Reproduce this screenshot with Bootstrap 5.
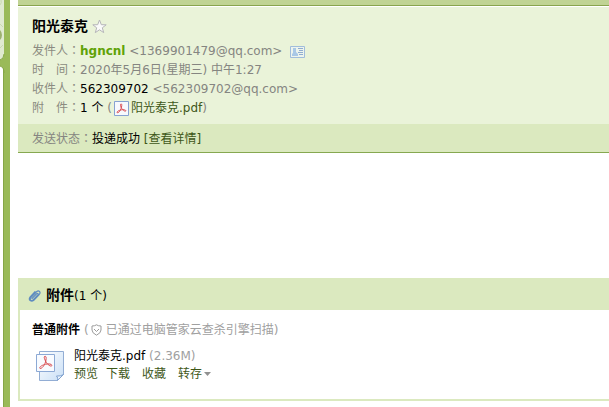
<!DOCTYPE html>
<html lang="zh-CN">
<head>
<meta charset="utf-8">
<meta name="viewport" content="width=device-width, initial-scale=1">
<title>阳光泰克</title>
<link href="https://cdn.jsdelivr.net/npm/bootstrap@5.3.0/dist/css/bootstrap.min.css" rel="stylesheet">
<style>
body { font-family: "DejaVu Sans", "Noto Sans CJK SC", sans-serif; font-size: 12px; line-height: 20px; color: #000; background: #fff; }
.side-rail { width: 10px; border-right: 6px solid #9aba58; box-shadow: inset -1px 0 #86a647; }
.side-rail svg { display: block; }
.mail-pane { padding-left: 8px; min-width: 0; }
.top-strip { height: 6px; background: #c0d394; border-bottom: 1px solid #89a44e; }
.mail-head { margin-top: 1px; padding: 8px 14px 6px; background: #eaf3d9; }
.mail-title { font-size: 14px; line-height: 22px; font-weight: 700; }
.mail-meta { padding-top: 5px; }
.send-state { padding: 5px 14px 3px; background: #dbe9bf; border-bottom: 1px solid #86a850; }
.mail-body { height: 125px; }
.meta-row { line-height: 19px; }
.meta-label { width: 48px; flex: none; color: #8b8b80; white-space: pre; }
.mid-colon { font-family: "Noto Sans CJK JP", sans-serif; line-height: 12px; }
.soft { color: #858581; }
.faint { color: #a0a0a0; }
.sender { color: #5fa207; }
.link-green { color: #3e5718; text-decoration: none; }
.link-green:hover { text-decoration: underline; }
.plain-btn { border: 0; padding: 0; background: none; line-height: inherit; display: inline-flex; }
.text-icon { margin: 0 2px; }
.attach-box { border: solid #dbe9bf; border-width: 0 0 2px 2px; }
.attach-head { padding: 8px 8px 4px; background: #dbe9bf; }
.attach-name { font-size: 14px; line-height: 14px; font-weight: 700; }
.attach-list { padding: 10px 12px 16px; }
.file-row { margin-top: 7px; line-height: 18px; padding-left: 4px; }
.file-actions { gap: 0 12px; }
</style>
</head>
<body>
<div class="d-flex min-vh-100">
  <aside class="side-rail flex-shrink-0">
    <svg width="10" height="76" viewBox="0 0 10 76" aria-hidden="true">
      <path d="M0 0h4v58L0 64z" fill="#e0ead0"/>
      <path d="M0 5q2-2 1-5M0 24l3 3M0 48l3-3" stroke="#c9d9b1" fill="none"/>
      <path d="M0 30q2 2 2 5t-2 5z" fill="#9cb16f"/>
      <path d="M5 54Q4 59 0 60v6q4 1 5 7z" fill="#9aba58"/>
      <path d="M4 54q0 5-4 6M0 66q4 1 4 7" fill="none" stroke="#86a647"/>
    </svg>
  </aside>
  <main class="mail-pane flex-grow-1">
    <div class="top-strip"></div>
    <header class="mail-head">
      <div class="d-flex align-items-center gap-1">
        <h1 class="mail-title mb-0">阳光泰克</h1>
        <button type="button" class="plain-btn" aria-label="星标">
          <svg width="15" height="15" viewBox="0 0 15 15"><path d="M7.5 1l1.8 4.7 4.9.1-3.9 3 1.4 4.8-4.2-2.8-4.2 2.8 1.4-4.8-3.9-3 4.9-.1z" fill="#fafafa" stroke="#b5b5b9"/></svg>
        </button>
      </div>
      <div class="mail-meta">
        <div class="meta-row d-flex">
          <span class="meta-label">发件人<span class="mid-colon" lang="ja">：</span></span>
          <span class="text-nowrap"><b class="sender">hgncnl</b> <span class="soft">&lt;1369901479@qq.com&gt;</span></span>
          <button type="button" class="plain-btn ms-2 align-self-center" aria-label="联系人">
            <svg width="15" height="12" viewBox="0 0 15 12"><path d="M.5.5h14v11H.5z" fill="#edf4ed" stroke="#a1bddb"/><path d="M3 2h3v4l2 2v2H2V8l1-1z" fill="#a9c8e6"/><path d="M8 2.5h5M9 4.5h4M8 6.5h5M9 8.5h4" stroke="#91add0"/></svg>
          </button>
        </div>
        <div class="meta-row d-flex"><span class="meta-label">时　间<span class="mid-colon" lang="ja">：</span></span><span class="soft">2020年5月6日(星期三) 中午1:27</span></div>
        <div class="meta-row d-flex"><span class="meta-label">收件人<span class="mid-colon" lang="ja">：</span></span><span>562309702 <span class="soft">&lt;562309702@qq.com&gt;</span></span></div>
        <div class="meta-row d-flex align-items-center">
          <span class="meta-label">附　件<span class="mid-colon" lang="ja">：</span></span><span>1 个 <span class="soft">(</span></span>
          <svg class="text-icon" width="15" height="15" viewBox="0 0 15 15" aria-hidden="true"><path d="M.5.5h14v14H.5z" fill="#f7f9fd" stroke="#86a2d2"/><path d="M6.8 3c1.5-.5 1 2 .3 4.500-.8 2.500-2.500 4.500-3.800 4.300-1.100-1.100 1.700-2.500 4.200-3 2.300-.4 4.800.2 4.300 1.200-.8 1-3.500-1.500-4.500-3.200C6.600 5.500 6.100 3.700 6.800 3z" fill="none" stroke="#db5055"/></svg>
          <span><a class="link-green" href="#file">阳光泰克.pdf</a><span class="soft">)</span></span>
        </div>
      </div>
    </header>
    <div class="send-state d-flex">
      <span class="soft">发送状态<span class="mid-colon" lang="ja">：</span></span><span>投递成功 <a class="link-green" href="#state">[查看详情]</a></span>
    </div>
    <div class="mail-body"></div>
    <section class="attach-box">
      <div class="attach-head d-flex align-items-center">
        <svg width="14" height="14" viewBox="0 0 14 14" aria-hidden="true"><g fill="none" stroke-linecap="round"><path d="M4 9.500l4.600-4.700c1.200-1 2.200 0 1.200 1.200l-4.700 4.900c-2 1.500-3.800-.3-2.300-2.300L8.500 2.800c2.300-2 4.700.2 2.700 2.700L5.800 11.300c-2.500 2.200-5.800-.3-3.800-3.300L7 2.700" stroke="#5f8cc0" stroke-width="1.200"/></g></svg>
        <span class="ps-1"><span class="attach-name">附件</span>(1 个)</span>
      </div>
      <div class="attach-list">
        <div class="d-flex align-items-center">
          <b>普通附件</b><span class="faint ps-1">(</span>
          <svg class="text-icon" width="13" height="12" viewBox="0 0 13 12" aria-hidden="true"><path d="M1 2q3 0 4.500-1.200Q7 2 10 2v4q0 3-4.500 5.200Q1 9 1 6z" fill="none" stroke="#9b9b9b"/><path d="M3 5l2.500 2.500L8 5" fill="none" stroke="#9b9b9b"/></svg>
          <span class="faint">已通过电脑管家云查杀引擎扫描)</span>
        </div>
        <div class="file-row d-flex" id="file">
          <svg class="flex-shrink-0 mt-1" width="30" height="32" viewBox="0 0 30 32" aria-hidden="true">
            <defs><linearGradient id="paper" x2="1" y2="1"><stop stop-color="#fff"/><stop offset="1" stop-color="#c9dff6"/></linearGradient></defs>
            <path d="M3.500.5h24v23l-6 6h-18z" fill="url(#paper)" stroke="#92add4"/>
            <path d="M27.500 23.500q-3 2-7 1.500 2 2 1 4.500z" fill="#eef6fe" stroke="#81a3d0"/>
            <path d="M.5 3.500h18v17H.5z" fill="#f8fbff" stroke="#8ca9d5"/>
            <path d="M8.500 5.500c2-1 2 2 1 5.500-1.200 3.800-3.700 6.800-5.500 6.500-1.200-1.500 2.200-3.500 5.800-4.300 3.400-.7 6.700 0 6 1.500-1 1.300-4.300-1-6-4.200-1.200-2.200-2-4.300-1.300-5z" fill="none" stroke="#d94b50"/>
          </svg>
          <div class="ps-2">
            <div>阳光泰克.pdf <span class="faint">(2.36M)</span></div>
            <div class="file-actions d-flex flex-wrap">
              <span class="d-flex gap-2"><a class="link-green" href="#preview">预览</a><a class="link-green" href="#download">下载</a></span>
              <a class="link-green" href="#fav">收藏</a>
              <button type="button" class="plain-btn link-green align-items-center">转存<svg class="text-icon" width="7" height="4" viewBox="0 0 7 4" aria-hidden="true"><path d="M0 0h7L3.500 4z" fill="#919191"/></svg></button>
            </div>
          </div>
        </div>
      </div>
    </section>
  </main>
</div>
<script src="https://cdn.jsdelivr.net/npm/bootstrap@5.3.0/dist/js/bootstrap.bundle.min.js"></script>
</body>
</html>
